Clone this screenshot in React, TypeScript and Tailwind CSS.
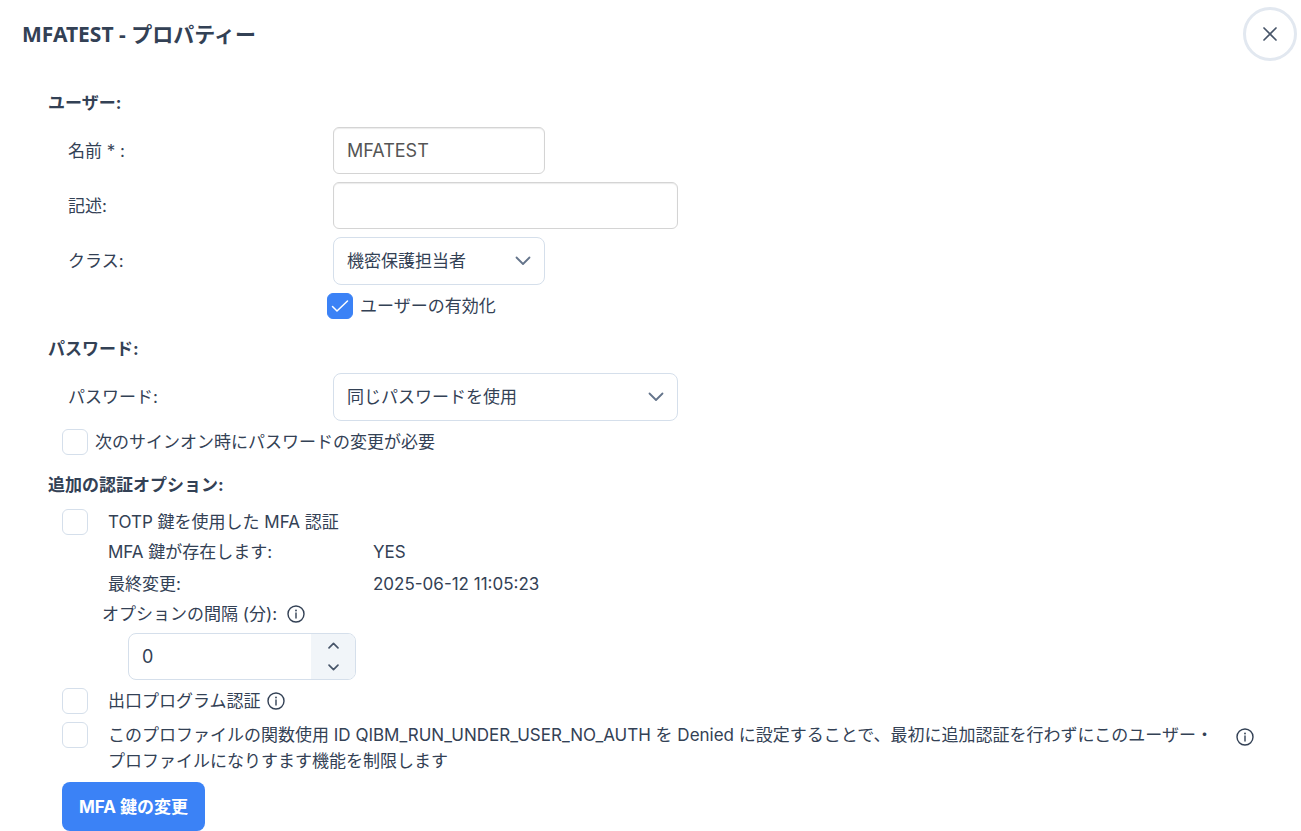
import { useState } from "react";
import type { ReactNode } from "react";

function InfoIcon({ label }: { label: string }) {
  return (
    <svg viewBox="0 0 18 18" className="size-[18px] shrink-0" fill="none" stroke="currentColor" role="img" aria-label={label}>
      <circle cx="9" cy="9" r="8" strokeWidth="1.4" />
      <path d="M9 8v5" strokeWidth="1.4" strokeLinecap="round" />
      <circle cx="9" cy="5.5" r="0.9" fill="currentColor" stroke="none" />
    </svg>
  );
}

function Chevron({ className, strokeWidth = 1.8 }: { className: string; strokeWidth?: number }) {
  return (
    <svg viewBox="0 0 16 10" className={className} fill="none" stroke="currentColor" aria-hidden="true">
      <path d="M1.5 1.5 8 8l6.5-6.5" strokeWidth={strokeWidth} strokeLinecap="round" strokeLinejoin="round" />
    </svg>
  );
}

function CheckBox({ id, defaultChecked = false }: { id: string; defaultChecked?: boolean }) {
  return (
    <span className="grid size-[26px] shrink-0 place-items-center">
      <input
        id={id}
        type="checkbox"
        defaultChecked={defaultChecked}
        className="peer col-start-1 row-start-1 size-[26px] appearance-none rounded-md border border-[#d5dfeb] bg-white checked:border-[#3b82f6] checked:bg-[#3b82f6]"
      />
      <svg
        viewBox="0 0 18 14"
        className="pointer-events-none col-start-1 row-start-1 hidden h-3.5 w-[18px] text-white peer-checked:block"
        fill="none"
        stroke="currentColor"
        aria-hidden="true"
      >
        <path d="M1.5 7.5 6 12 16.5 2" strokeWidth="1.5" strokeLinecap="round" strokeLinejoin="round" />
      </svg>
    </span>
  );
}

function Field({ id, label, children }: { id: string; label: string; children: ReactNode }) {
  return (
    <div className="flex items-center pl-5">
      <label htmlFor={id} className="w-[265px] shrink-0">
        {label}
      </label>
      {children}
    </div>
  );
}

function SelectBox({ id, width, options }: { id: string; width: string; options: string[] }) {
  return (
    <div className={`grid items-center ${width}`}>
      <select
        id={id}
        className="col-start-1 row-start-1 h-12 w-full appearance-none rounded-lg border border-[#d5dfeb] bg-white pr-10 pl-[13px]"
      >
        {options.map((option) => (
          <option key={option}>{option}</option>
        ))}
      </select>
      <Chevron className="pointer-events-none col-start-1 row-start-1 mr-3.5 h-2.5 w-4 justify-self-end text-[#64748b]" />
    </div>
  );
}

function SectionTitle({ children }: { children: ReactNode }) {
  return <h2 className="leading-6 font-bold">{children}</h2>;
}

export default function App() {
  const [interval, setIntervalValue] = useState(0);

  return (
    <main className="bg-white font-['Inter','Noto_Sans_CJK_JP',sans-serif] text-[17px] leading-[26px] text-[#334155]">
      <header className="flex items-center justify-between pt-[7px] pr-1 pl-[22px]">
        <h1 className="font-['Noto_Sans','Noto_Sans_CJK_JP',sans-serif] text-[21px] leading-8 font-bold">
          MFATEST - プロパティー
        </h1>
        <button
          type="button"
          aria-label="閉じる"
          className="flex size-[54px] items-center justify-center rounded-full border-[3px] border-[#e2e8f0] text-[#475569]"
        >
          <svg viewBox="0 0 14 14" className="size-3.5" fill="none" stroke="currentColor" aria-hidden="true">
            <path d="m1 1 12 12M13 1 1 13" strokeWidth="1.7" strokeLinecap="round" />
          </svg>
        </button>
      </header>

      <form className="pt-[30px] pr-[47px] pl-12" onSubmit={(event) => event.preventDefault()}>
        <section>
          <SectionTitle>ユーザー:</SectionTitle>
          <div className="mt-3 flex flex-col gap-2">
            <Field id="name" label="名前 * :">
              <input
                id="name"
                defaultValue="MFATEST"
                className="h-[47px] w-[212px] rounded-md border border-[#d4d4d4] px-[13px] text-lg text-[#555555] shadow-[inset_0_1px_1px_rgba(0,0,0,0.08)]"
              />
            </Field>
            <Field id="description" label="記述:">
              <input
                id="description"
                className="h-[47px] w-[345px] rounded-md border border-[#d4d4d4] px-[13px] text-lg text-[#555555] shadow-[inset_0_1px_1px_rgba(0,0,0,0.08)]"
              />
            </Field>
            <Field id="class" label="クラス:">
              <SelectBox id="class" width="w-[212px]" options={["機密保護担当者"]} />
            </Field>
            <div className="flex items-center gap-[7px] pl-[279px]">
              <CheckBox id="enabled" defaultChecked />
              <label htmlFor="enabled">ユーザーの有効化</label>
            </div>
          </div>
        </section>

        <section className="mt-[18px]">
          <SectionTitle>パスワード:</SectionTitle>
          <div className="mt-3 flex flex-col gap-2">
            <Field id="password" label="パスワード:">
              <SelectBox id="password" width="w-[345px]" options={["同じパスワードを使用"]} />
            </Field>
            <div className="flex items-center gap-[7px] pl-3.5">
              <CheckBox id="change" />
              <label htmlFor="change">次のサインオン時にパスワードの変更が必要</label>
            </div>
          </div>
        </section>

        <section className="mt-[18px]">
          <SectionTitle>追加の認証オプション:</SectionTitle>
          <div className="mt-3 flex items-center gap-5 pl-3.5">
            <CheckBox id="totp" />
            <label htmlFor="totp">TOTP 鍵を使用した MFA 認証</label>
          </div>
          <dl className="mt-1 grid grid-cols-[265px_auto] justify-start gap-y-1.5 pl-[60px]">
            <dt>MFA 鍵が存在します:</dt>
            <dd>YES</dd>
            <dt>最終変更:</dt>
            <dd>2025-06-12 11:05:23</dd>
          </dl>
          <div className="mt-1 flex items-center gap-2.5 pl-[54px]">
            <label htmlFor="interval">オプションの間隔 (分):</label>
            <InfoIcon label="オプションの間隔の説明" />
          </div>
          <div className="mt-1.5 ml-20 flex h-[47px] w-[228px] overflow-hidden rounded-lg border border-[#d5dfeb]">
            <input
              id="interval"
              type="number"
              value={interval}
              onChange={(event) => setIntervalValue(Number(event.target.value))}
              className="min-w-0 flex-1 [appearance:textfield] px-[13px] text-lg [&::-webkit-inner-spin-button]:appearance-none"
            />
            <div className="flex w-11 flex-col bg-[#f1f5f9] text-[#475569]">
              <button
                type="button"
                aria-label="増やす"
                onClick={() => setIntervalValue(interval + 1)}
                className="flex flex-1 items-center justify-center"
              >
                <Chevron className="h-[7px] w-[11px] rotate-180" strokeWidth={2.4} />
              </button>
              <button
                type="button"
                aria-label="減らす"
                onClick={() => setIntervalValue(interval - 1)}
                className="flex flex-1 items-center justify-center"
              >
                <Chevron className="h-[7px] w-[11px]" strokeWidth={2.4} />
              </button>
            </div>
          </div>
          <div className="mt-2 flex items-center pl-3.5">
            <CheckBox id="exit" />
            <label htmlFor="exit" className="ml-5">
              出口プログラム認証
            </label>
            <span className="ml-1.5">
              <InfoIcon label="出口プログラム認証の説明" />
            </span>
          </div>
          <div className="mt-2 flex items-start pl-3.5">
            <CheckBox id="restrict" />
            <label htmlFor="restrict" className="ml-5 flex-1">
              このプロファイルの関数使用 ID QIBM_RUN_UNDER_USER_NO_AUTH を Denied
              に設定することで、最初に追加認証を行わずにこのユーザー・プロファイルになりすます機能を制限します
            </label>
            <span className="mt-1.5 ml-4">
              <InfoIcon label="機能制限の説明" />
            </span>
          </div>
          <button
            type="button"
            className="mt-2 ml-3.5 h-[49px] rounded-lg bg-[#3b82f6] px-[17px] font-bold text-white"
          >
            MFA 鍵の変更
          </button>
        </section>
      </form>
    </main>
  );
}
